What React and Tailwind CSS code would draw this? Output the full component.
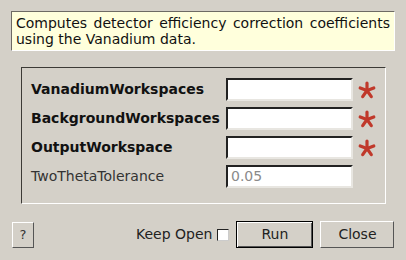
const rows = [
  { label: "VanadiumWorkspaces", bold: true, required: true, value: "" },
  { label: "BackgroundWorkspaces", bold: true, required: true, value: "" },
  { label: "OutputWorkspace", bold: true, required: true, value: "" },
  { label: "TwoThetaTolerance", bold: false, required: false, value: "0.05" },
];

// five-armed asterisk used for mandatory properties
const Star = () => (
  <svg width="18" height="18" viewBox="0 0 18 18" className="shrink-0">
    <g stroke="#c0392b" strokeWidth="3.2" strokeLinecap="round">
      <line x1="9" y1="9.5" x2="9" y2="2" />
      <line x1="9" y1="9.5" x2="15.8" y2="7" />
      <line x1="9" y1="9.5" x2="13.3" y2="15.6" />
      <line x1="9" y1="9.5" x2="4.7" y2="15.6" />
      <line x1="9" y1="9.5" x2="2.2" y2="7" />
    </g>
  </svg>
);

const App = () => {
  return (
    <div
      className="w-[406px] h-[260px] bg-[#d4d0c8] text-[14px] text-[#111] flex flex-col overflow-hidden"
      style={{ fontFamily: '"DejaVu Sans", sans-serif' }}
    >
      <div className="mt-[11px] ml-[11px] w-[384px] h-[40px] bg-[#ffffdc] border border-t-[#6d6a64] border-l-[#6d6a64] border-r-white border-b-white px-[4px] pt-[3px] leading-[16px] text-justify [text-align-last:left]">
        Computes detector efficiency correction coefficients using the Vanadium data.
      </div>

      <div className="mt-[16px] ml-[21px] w-[365px] h-[137px] border border-t-[#3c3a36] border-l-[#3c3a36] border-r-white border-b-white pt-[10px] pl-[9px] flex flex-col gap-[6px]">
        {rows.map((r) => (
          <div key={r.label} className="flex items-center h-[23px]">
            <span className={`w-[195px] whitespace-nowrap ${r.bold ? "font-bold" : "text-[#333]"}`}>{r.label}</span>
            <div className="w-[127px] h-[23px] bg-white border-2 border-t-[#222] border-l-[#222] border-r-[#e8e6e1] border-b-[#e8e6e1] flex items-center px-[3px] text-[#8a8a8a]">
              {r.value}
            </div>
            {r.required && (
              <div className="ml-[5px]">
                <Star />
              </div>
            )}
          </div>
        ))}
      </div>

      <div className="mt-[17px] flex items-center">
        <button className="ml-[12px] w-[22px] h-[26px] border border-t-white border-l-white border-r-[#555] border-b-[#555] text-[13px] text-[#333]">
          ?
        </button>
        <span className="ml-[102px] text-[#222]">Keep Open</span>
        <span className="ml-[5px] w-[12px] h-[12px] bg-white border border-[#222] border-r-[#ccc] border-b-[#ccc]" />
        <button className="ml-[7px] w-[77px] h-[27px] border border-black shadow-[inset_1px_1px_white,inset_-1px_-1px_#555] text-[#222]">
          Run
        </button>
        <button className="ml-[7px] w-[74px] h-[27px] border border-t-white border-l-white border-r-[#555] border-b-[#555] text-[#222]">
          Close
        </button>
      </div>
    </div>
  );
};

export default App;
